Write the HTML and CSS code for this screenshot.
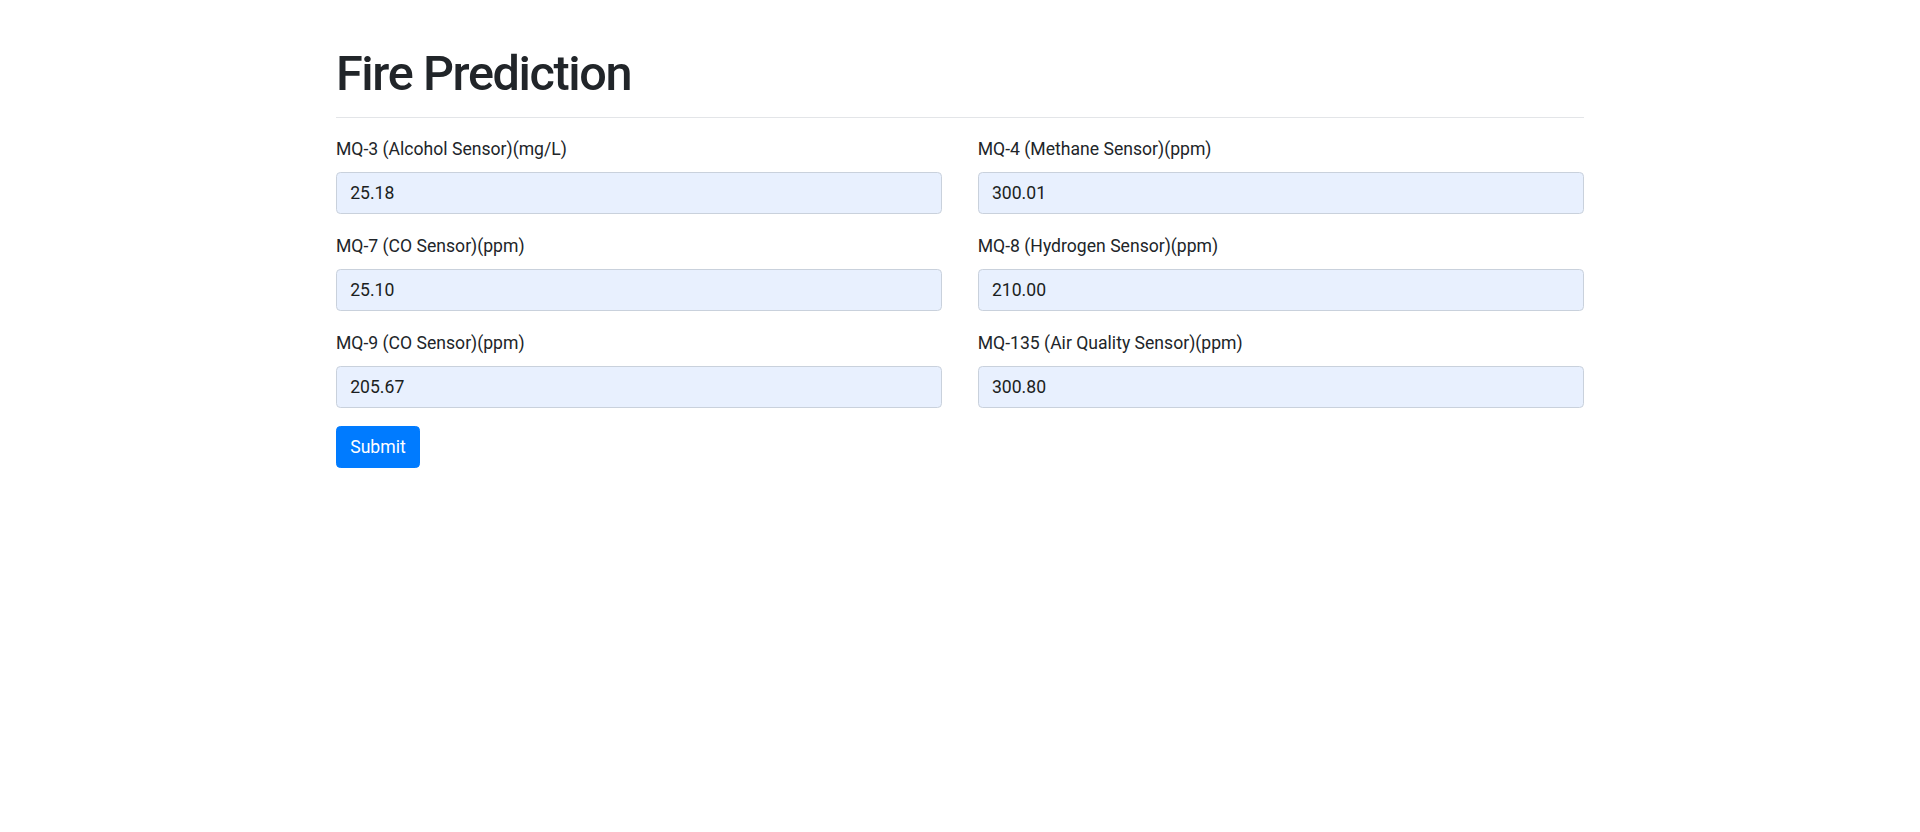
FILE: index.html
```html
<!DOCTYPE html>
<html lang="en">
<head>
<meta charset="utf-8">
<title>Fire Prediction</title>
<link rel="stylesheet" href="styles.css">
</head>
<body>
<div class="container">
  <h1 class="title">Fire Prediction</h1>
  <hr class="divider">
  <form class="form">
    <div class="grid">
      <div class="field">
        <label class="label" for="mq3">MQ-3 (Alcohol Sensor)(mg/L)</label>
        <input class="input" id="mq3" type="text" value="25.18">
      </div>
      <div class="field">
        <label class="label" for="mq4">MQ-4 (Methane Sensor)(ppm)</label>
        <input class="input" id="mq4" type="text" value="300.01">
      </div>
      <div class="field">
        <label class="label" for="mq7">MQ-7 (CO Sensor)(ppm)</label>
        <input class="input" id="mq7" type="text" value="25.10">
      </div>
      <div class="field">
        <label class="label" for="mq8">MQ-8 (Hydrogen Sensor)(ppm)</label>
        <input class="input" id="mq8" type="text" value="210.00">
      </div>
      <div class="field">
        <label class="label" for="mq9">MQ-9 (CO Sensor)(ppm)</label>
        <input class="input" id="mq9" type="text" value="205.67">
      </div>
      <div class="field">
        <label class="label" for="mq135">MQ-135 (Air Quality Sensor)(ppm)</label>
        <input class="input" id="mq135" type="text" value="300.80">
      </div>
    </div>
    <button class="btn" type="button">Submit</button>
  </form>
</div>
</body>
</html>
```

FILE: styles.css
```css
html, body {
  margin: 0;
  padding: 0;
  background: #ffffff;
}

body {
  font-family: Roboto, "Liberation Sans", Arial, sans-serif;
  color: #212529;
  font-size: 17.6px;
  line-height: 1.5;
}

.container {
  width: 1248px;
  margin: 0 auto;
  padding-top: 45px;
}

.title {
  margin: 0;
  font-size: 48.6px;
  font-weight: 500;
  letter-spacing: -1.4px;
  line-height: 58px;
  color: #212529;
}

.divider {
  margin: 13.6px 0 18.5px 0;
  border: 0;
  border-top: 1px solid #e3e5e8;
  height: 0;
}

.grid {
  display: grid;
  grid-template-columns: 1fr 1fr;
  column-gap: 35.5px;
  row-gap: 19.2px;
}

.field {
  display: flex;
  flex-direction: column;
}

.label {
  display: block;
  line-height: 26.4px;
  margin-bottom: 9.3px;
  color: #212529;
}

.input {
  box-sizing: border-box;
  height: 42px;
  width: 100%;
  padding: 0 13.2px;
  font-family: inherit;
  font-size: 17.6px;
  color: #1b1e21;
  background: #e8f0fe;
  border: 1.1px solid #c9d1dc;
  border-radius: 4.4px;
  outline: none;
}

.btn {
  margin-top: 18px;
  height: 42px;
  padding: 0 13.2px;
  font-family: inherit;
  font-size: 17.6px;
  color: #ffffff;
  background: #007bff;
  border: 1px solid #007bff;
  border-radius: 4.4px;
  cursor: pointer;
}
```
